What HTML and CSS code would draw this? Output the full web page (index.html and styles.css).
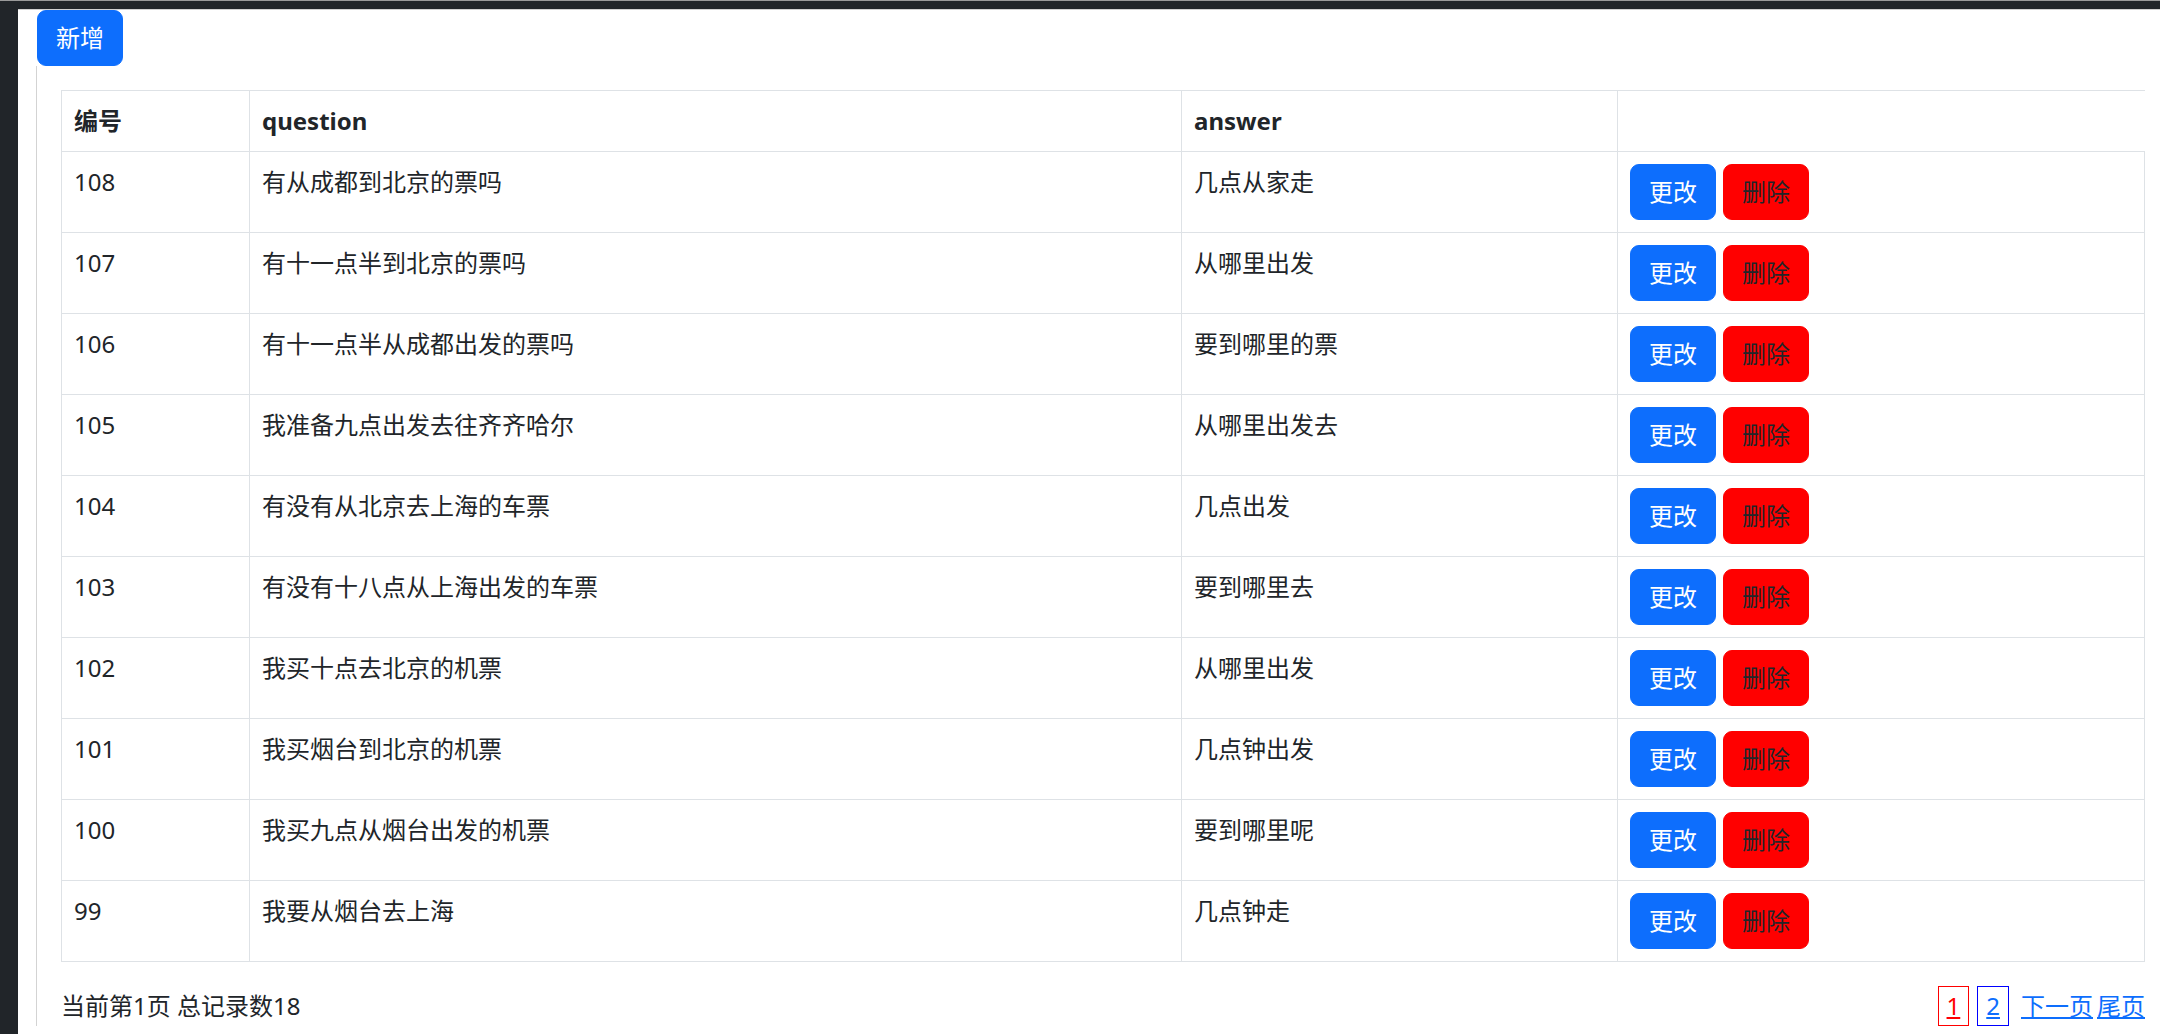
FILE: index.html
```html
<!DOCTYPE html>
<html lang="zh">
<head>
    <meta charset="UTF-8">
    <meta name="viewport" content="width=device-width, initial-scale=1.0">
    <title>问答管理</title>
    <link rel="stylesheet" href="styles.css">
</head>
<body>
    <div class="page">
        <div class="toolbar">
            <button class="btn btn-primary">新增</button>
        </div>

        <div class="content">
            <table class="data-table">
                <colgroup>
                    <col class="col-id">
                    <col class="col-question">
                    <col class="col-answer">
                    <col class="col-ops">
                </colgroup>
                <thead>
                    <tr>
                        <th>编号</th>
                        <th>question</th>
                        <th>answer</th>
                        <th class="th-last"></th>
                    </tr>
                </thead>
                <tbody>
                    <tr>
                        <td>108</td>
                        <td>有从成都到北京的票吗</td>
                        <td>几点从家走</td>
                        <td><div class="ops"><button class="btn btn-primary">更改</button><button class="btn btn-delete">删除</button></div></td>
                    </tr>
                    <tr>
                        <td>107</td>
                        <td>有十一点半到北京的票吗</td>
                        <td>从哪里出发</td>
                        <td><div class="ops"><button class="btn btn-primary">更改</button><button class="btn btn-delete">删除</button></div></td>
                    </tr>
                    <tr>
                        <td>106</td>
                        <td>有十一点半从成都出发的票吗</td>
                        <td>要到哪里的票</td>
                        <td><div class="ops"><button class="btn btn-primary">更改</button><button class="btn btn-delete">删除</button></div></td>
                    </tr>
                    <tr>
                        <td>105</td>
                        <td>我准备九点出发去往齐齐哈尔</td>
                        <td>从哪里出发去</td>
                        <td><div class="ops"><button class="btn btn-primary">更改</button><button class="btn btn-delete">删除</button></div></td>
                    </tr>
                    <tr>
                        <td>104</td>
                        <td>有没有从北京去上海的车票</td>
                        <td>几点出发</td>
                        <td><div class="ops"><button class="btn btn-primary">更改</button><button class="btn btn-delete">删除</button></div></td>
                    </tr>
                    <tr>
                        <td>103</td>
                        <td>有没有十八点从上海出发的车票</td>
                        <td>要到哪里去</td>
                        <td><div class="ops"><button class="btn btn-primary">更改</button><button class="btn btn-delete">删除</button></div></td>
                    </tr>
                    <tr>
                        <td>102</td>
                        <td>我买十点去北京的机票</td>
                        <td>从哪里出发</td>
                        <td><div class="ops"><button class="btn btn-primary">更改</button><button class="btn btn-delete">删除</button></div></td>
                    </tr>
                    <tr>
                        <td>101</td>
                        <td>我买烟台到北京的机票</td>
                        <td>几点钟出发</td>
                        <td><div class="ops"><button class="btn btn-primary">更改</button><button class="btn btn-delete">删除</button></div></td>
                    </tr>
                    <tr>
                        <td>100</td>
                        <td>我买九点从烟台出发的机票</td>
                        <td>要到哪里呢</td>
                        <td><div class="ops"><button class="btn btn-primary">更改</button><button class="btn btn-delete">删除</button></div></td>
                    </tr>
                    <tr>
                        <td>99</td>
                        <td>我要从烟台去上海</td>
                        <td>几点钟走</td>
                        <td><div class="ops"><button class="btn btn-primary">更改</button><button class="btn btn-delete">删除</button></div></td>
                    </tr>
                </tbody>
            </table>

            <div class="pager-row">
                <span class="pager-info">当前第1页 总记录数18</span>
                <div class="pager">
                    <a href="#" class="page-num active">1</a>
                    <a href="#" class="page-num">2</a>
                    <a href="#" class="page-link next">下一页</a>
                    <a href="#" class="page-link last">尾页</a>
                </div>
            </div>
        </div>
    </div>
</body>
</html>
```

FILE: styles.css
```css
/* 基础样式 */
body {
    margin: 0;
    padding: 0;
    background: #212529;
    border-top: 1px solid #9a9a9a;
    font-family: "Noto Sans", "Noto Sans CJK SC", sans-serif;
    font-size: 24px;
    line-height: 36px;
    color: #212529;
}

.page {
    margin: 8px 0 0 18px;
    background: #fff;
    border-top: 1px solid #d0d0d0;
    min-height: calc(100vh - 10px);
}

.toolbar {
    padding-left: 19px;
}

.content {
    margin-left: 18px;
    border-left: 1px solid #d3d3d3;
    padding: 24px 15px 0 24px;
}

/* 按钮 */
.btn {
    display: inline-block;
    font-family: inherit;
    font-size: 24px;
    line-height: 36px;
    padding: 9px 18px;
    border: 1px solid transparent;
    border-radius: 9px;
    cursor: pointer;
}

.btn-primary {
    background: #0d6efd;
    border-color: #0d6efd;
    color: #fff;
}

.btn-delete {
    background: #ff0000;
    border-color: #ff0000;
    color: #212529;
}

/* 表格 */
.data-table {
    width: 100%;
    border-collapse: collapse;
    table-layout: fixed;
    margin-bottom: 24px;
}

.col-id { width: 188px; }
.col-question { width: 932px; }
.col-answer { width: 436px; }

.data-table th,
.data-table td {
    border: 1px solid #dee2e6;
    padding: 12px;
    text-align: left;
    vertical-align: top;
}

.data-table th {
    font-weight: 700;
}

.data-table .th-last {
    border-right: none;
}

.ops {
    display: flex;
    gap: 7px;
}

/* 分页 */
.pager-row {
    display: flex;
    justify-content: space-between;
    align-items: center;
}

.pager {
    display: flex;
    align-items: center;
}

.pager a {
    color: #0d6efd;
    text-decoration: underline;
}

.page-num {
    border: 1px solid #0000ff;
    padding: 1px 8px;
    margin-right: 8px;
}

.page-num.active {
    color: #ff0000 !important;
    border-color: #ff0000;
}

.page-link.next {
    margin-left: 4px;
    margin-right: 4px;
}
```
